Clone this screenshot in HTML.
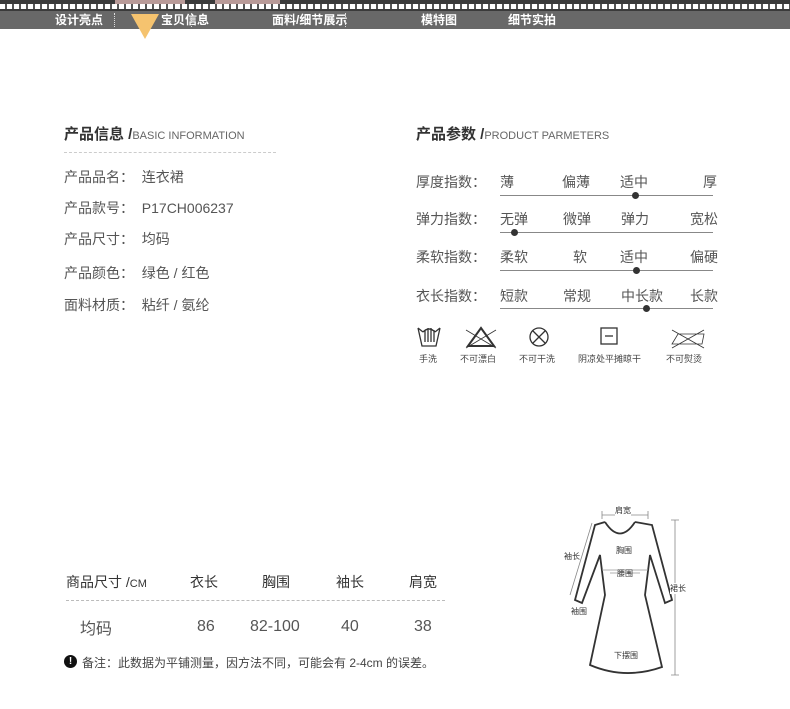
<!DOCTYPE html>
<html><head><meta charset="utf-8"><style>
*{margin:0;padding:0;box-sizing:border-box}
body{width:790px;height:709px;background:#fff;position:relative;overflow:hidden;font-family:"Liberation Sans","Noto Sans CJK SC",sans-serif;color:#555}
.a{position:absolute;white-space:nowrap}
.nav{position:absolute;left:0;top:11px;width:790px;height:18px;background:#686868}
.nav span{position:absolute;top:1px;font-size:12px;color:#fff;font-weight:bold;line-height:16px}
.sep{position:absolute;top:13px;height:14px;border-left:1px dotted #ddd}
.h{font-size:15px;font-weight:bold;color:#333}
.h small{font-size:11px;font-weight:normal;color:#666}
.r{font-size:14px;color:#555}
.line{position:absolute;height:1px;background:#888}
.dot{position:absolute;width:7px;height:7px;border-radius:50%;background:#333}
.ic{font-size:9px;color:#444}
</style></head><body>
<div class="a" style="left:0;top:0;width:790px;height:11px;background:#3a3a3a"></div>
<div class="a" style="left:115px;top:0;width:70px;height:4px;background:#b89a98"></div>
<div class="a" style="left:215px;top:0;width:65px;height:4px;background:#b89a98"></div>
<div class="a" style="left:0;top:4px;width:790px;height:5px;background:repeating-linear-gradient(90deg,#fff 0 5px,#555 5px 7px)"></div>
<div class="nav">
<span style="left:55px">设计亮点</span>
<span style="left:161px">宝贝信息</span>
<span style="left:272px">面料/细节展示</span>
<span style="left:421px">模特图</span>
<span style="left:508px">细节实拍</span>
</div>
<div class="sep" style="left:114px"></div>
<div class="sep" style="left:191px"></div>
<div class="sep" style="left:345px"></div>
<div class="sep" style="left:424px;display:none"></div>
<div class="a" style="left:131px;top:14px;width:0;height:0;border-left:14px solid transparent;border-right:14px solid transparent;border-top:25px solid #f5c36f"></div>

<div class="a h" style="left:64px;top:123px">产品信息 /<small>BASIC INFORMATION</small></div>
<div class="a" style="left:64px;top:152px;width:212px;border-top:1px dashed #ccc"></div>
<div class="a r" style="left:64px;top:167px">产品品名：&nbsp; 连衣裙</div>
<div class="a r" style="left:64px;top:198px">产品款号：&nbsp; P17CH006237</div>
<div class="a r" style="left:64px;top:229px">产品尺寸：&nbsp; 均码</div>
<div class="a r" style="left:64px;top:263px">产品颜色：&nbsp; 绿色 / 红色</div>
<div class="a r" style="left:64px;top:295px">面料材质：&nbsp; 粘纤 / 氨纶</div>

<div class="a h" style="left:416px;top:123px">产品参数 /<small>PRODUCT PARMETERS</small></div>
<div class="a r" style="left:416px;top:172px">厚度指数：</div>
<div class="a r" style="left:500px;top:172px">薄</div><div class="a r" style="left:562px;top:172px">偏薄</div><div class="a r" style="left:620px;top:172px">适中</div><div class="a r" style="left:703px;top:172px">厚</div>
<div class="line" style="left:500px;top:195px;width:213px"></div><div class="dot" style="left:632px;top:192px"></div>
<div class="a r" style="left:416px;top:209px">弹力指数：</div>
<div class="a r" style="left:500px;top:209px">无弹</div><div class="a r" style="left:563px;top:209px">微弹</div><div class="a r" style="left:621px;top:209px">弹力</div><div class="a r" style="left:690px;top:209px">宽松</div>
<div class="line" style="left:500px;top:232px;width:213px"></div><div class="dot" style="left:511px;top:229px"></div>
<div class="a r" style="left:416px;top:247px">柔软指数：</div>
<div class="a r" style="left:500px;top:247px">柔软</div><div class="a r" style="left:573px;top:247px">软</div><div class="a r" style="left:620px;top:247px">适中</div><div class="a r" style="left:690px;top:247px">偏硬</div>
<div class="line" style="left:500px;top:270px;width:213px"></div><div class="dot" style="left:633px;top:267px"></div>
<div class="a r" style="left:416px;top:286px">衣长指数：</div>
<div class="a r" style="left:500px;top:286px">短款</div><div class="a r" style="left:563px;top:286px">常规</div><div class="a r" style="left:621px;top:286px">中长款</div><div class="a r" style="left:690px;top:286px">长款</div>
<div class="line" style="left:500px;top:308px;width:213px"></div><div class="dot" style="left:643px;top:305px"></div>

<svg class="a" style="left:410px;top:322px" width="310" height="30" viewBox="0 0 310 30" fill="none" stroke="#333" stroke-width="1.3">
<path d="M8 6 L12 24 L26 24 L30 6 M8 6 L13 10 M30 6 L25 10 M15 8 L15 20 M18 6 L18 20 M21 6 L21 20 M24 8 L24 20 M13 10 Q19 4 25 10"/>
<path d="M58 24 L71 6 L84 24 Z" stroke-width="2"/><path d="M56 8 L86 26 M56 26 L86 8" stroke-width="0.8"/>
<circle cx="129" cy="15" r="9"/><path d="M123 9 L135 21 M135 9 L123 21"/>
<rect x="191" y="6" width="16" height="16"/><path d="M195 14 L203 14"/>
<path d="M262 22 L268 12 L294 12 L292 22 Z M262 8 L294 26 M262 26 L294 8" stroke-width="0.8"/>
</svg>
<div class="a ic" style="left:419px;top:352px">手洗</div>
<div class="a ic" style="left:460px;top:352px">不可漂白</div>
<div class="a ic" style="left:519px;top:352px">不可干洗</div>
<div class="a ic" style="left:578px;top:352px">阴凉处平摊晾干</div>
<div class="a ic" style="left:666px;top:352px">不可熨烫</div>

<div class="a" style="left:66px;top:572px;font-size:14px;color:#333">商品尺寸 /<span style="font-size:11px">CM</span></div>
<div class="a r" style="left:190px;top:572px;color:#333">衣长</div>
<div class="a r" style="left:262px;top:572px;color:#333">胸围</div>
<div class="a r" style="left:336px;top:572px;color:#333">袖长</div>
<div class="a r" style="left:409px;top:572px;color:#333">肩宽</div>
<div class="a" style="left:66px;top:600px;width:379px;border-top:1px dashed #bbb"></div>
<div class="a" style="left:80px;top:615px;font-size:16px;color:#555">均码</div>
<div class="a" style="left:197px;top:618px;font-size:16px;color:#555">86</div>
<div class="a" style="left:250px;top:618px;font-size:16px;color:#555">82-100</div>
<div class="a" style="left:341px;top:618px;font-size:16px;color:#555">40</div>
<div class="a" style="left:414px;top:618px;font-size:16px;color:#555">38</div>
<div class="a" style="left:64px;top:655px;width:13px;height:13px;border-radius:50%;background:#111;color:#fff;font-size:10px;font-weight:bold;text-align:center;line-height:13px">!</div>
<div class="a" style="left:82px;top:654px;font-size:12px;color:#444">备注：此数据为平铺测量，因方法不同，可能会有 2-4cm 的误差。</div>

<svg class="a" style="left:550px;top:495px" width="160" height="185" viewBox="0 0 160 185" fill="none" stroke="#333" stroke-width="1.8">
<path d="M55 27 Q70 50 85 27"/>
<path d="M55 27 L45 30 L25 105 L32 108 L50 60 L55 100 L40 170 Q75 185 112 172 L95 100 L100 60 L115 108 L122 105 L102 30 L85 27"/>
<path d="M52 75 L98 75 M60 78 L90 78" stroke="#999" stroke-width="0.8"/>
<path d="M52 20 L98 20 M52 16 L52 24 M98 16 L98 24 M125 25 L125 180 M121 25 L129 25 M121 180 L129 180 M42 28 L20 100" stroke="#888" stroke-width="0.8"/>
</svg>
<div class="a" style="left:615px;top:505px;font-size:8px;color:#333;background:#fff">肩宽</div>
<div class="a" style="left:616px;top:545px;font-size:8px;color:#333">胸围</div>
<div class="a" style="left:617px;top:568px;font-size:8px;color:#333">腰围</div>
<div class="a" style="left:564px;top:551px;font-size:8px;color:#333">袖长</div>
<div class="a" style="left:571px;top:606px;font-size:8px;color:#333">袖围</div>
<div class="a" style="left:670px;top:583px;font-size:8px;color:#333;background:#fff">裙长</div>
<div class="a" style="left:614px;top:650px;font-size:8px;color:#333">下摆围</div>
</body></html>
